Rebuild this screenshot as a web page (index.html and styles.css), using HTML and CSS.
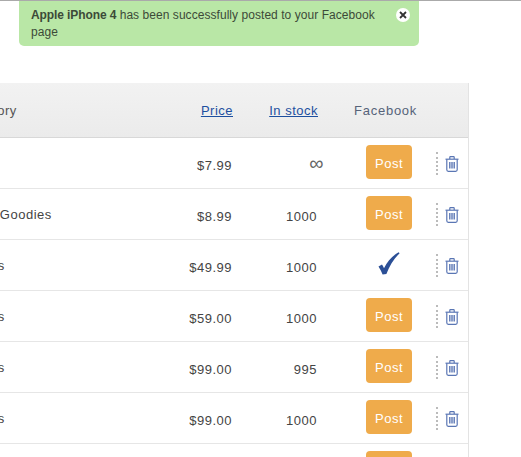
FILE: index.html
```html
<!DOCTYPE html>
<html lang="en">
<head>
<meta charset="utf-8">
<title>Products</title>
<link rel="stylesheet" href="styles.css">
</head>
<body>
<div class="notice">
  <p class="notice-text"><strong>Apple iPhone 4</strong> has been successfully posted to your Facebook page</p>
  <span class="notice-close"><svg viewBox="0 0 8 8" width="8" height="8"><path d="M1 1L7 7M7 1L1 7"/></svg></span>
</div>
<table class="products">
  <colgroup><col class="c-name"><col class="c-price"><col class="c-stock"><col class="c-fb"><col class="c-act"></colgroup>
  <thead>
    <tr><th class="name">Category</th><th class="num"><a href="#">Price</a></th><th class="num"><a href="#">In stock</a></th><th class="fb">Facebook</th><th></th></tr>
  </thead>
  <tbody>
    <tr><td class="name"></td><td class="num">$7.99</td><td class="num inf">∞</td><td class="fb"><a class="post" href="#">Post</a></td><td><div class="act"><span class="dots"></span><svg class="trash" viewBox="0 0 14 16"><use href="#t"/></svg></div></td></tr>
    <tr><td class="name">Apple Goodies</td><td class="num">$8.99</td><td class="num">1000</td><td class="fb"><a class="post" href="#">Post</a></td><td><div class="act"><span class="dots"></span><svg class="trash" viewBox="0 0 14 16"><use href="#t"/></svg></div></td></tr>
    <tr><td class="name">Tablets</td><td class="num">$49.99</td><td class="num">1000</td><td class="fb"><svg class="check" viewBox="0 0 22 23"><path d="M0.5 14.5L4 12.4C4.8 13.6 5.4 14.8 6 16.2C9.5 9.5 14 4 20.6 0.2L21.6 1.2C15.5 7 11.5 14 8.4 22L4.6 22.6C3.6 19.8 2.2 17 0.5 14.5Z"/></svg></td><td><div class="act"><span class="dots"></span><svg class="trash" viewBox="0 0 14 16"><use href="#t"/></svg></div></td></tr>
    <tr><td class="name">Tablets</td><td class="num">$59.00</td><td class="num">1000</td><td class="fb"><a class="post" href="#">Post</a></td><td><div class="act"><span class="dots"></span><svg class="trash" viewBox="0 0 14 16"><use href="#t"/></svg></div></td></tr>
    <tr><td class="name">Tablets</td><td class="num">$99.00</td><td class="num">995</td><td class="fb"><a class="post" href="#">Post</a></td><td><div class="act"><span class="dots"></span><svg class="trash" viewBox="0 0 14 16"><use href="#t"/></svg></div></td></tr>
    <tr><td class="name">Tablets</td><td class="num">$99.00</td><td class="num">1000</td><td class="fb"><a class="post" href="#">Post</a></td><td><div class="act"><span class="dots"></span><svg class="trash" viewBox="0 0 14 16"><use href="#t"/></svg></div></td></tr>
    <tr><td class="name"></td><td class="num"></td><td class="num"></td><td class="fb"><a class="post" href="#">Post</a></td><td></td></tr>
  </tbody>
</table>
<svg class="defs" width="0" height="0"><defs><g id="t" fill="none" stroke="#5a76b4" stroke-width="1.2"><path d="M0.5 3.2H13.5"/><path d="M4.8 3V1.2Q4.8 0.6 5.4 0.6H8.6Q9.2 0.6 9.2 1.2V3"/><path d="M1.8 3.2V13.8Q1.8 15.3 3.3 15.3H10.7Q12.2 15.3 12.2 13.8V3.2"/><path d="M4.8 6V12.6M7 6V12.6M9.2 6V12.6" stroke-width="1.4"/></g></defs></svg>
</body>
</html>
```
FILE: styles.css
```css
html, body {
  margin: 0;
  padding: 0;
  height: 457px;
  overflow: hidden;
  background: #fff;
}
body {
  border-top: 1px solid #aaa;
  box-sizing: border-box;
  font-family: "Liberation Sans", Arial, sans-serif;
  font-size: 13px;
  letter-spacing: 0.5px;
  color: #444;
}
.notice {
  display: flex;
  align-items: flex-start;
  justify-content: space-between;
  box-sizing: border-box;
  width: 400px;
  height: 45px;
  margin-left: 19px;
  padding: 6px 9px 0 12px;
  background: #b9e7a6;
  border-radius: 0 0 5px 5px;
  color: #3c4a38;
}
.notice-text {
  width: 350px;
  margin: 0;
  font-size: 12px;
  letter-spacing: 0.05px;
  line-height: 17px;
}
.notice-text strong {
  letter-spacing: -0.1px;
}
.notice-close {
  display: flex;
  align-items: center;
  justify-content: center;
  width: 14px;
  height: 14px;
  margin-top: 1px;
  border-radius: 50%;
  background: #fff;
}
.notice-close path {
  fill: none;
  stroke: #333;
  stroke-width: 1.8;
}
.products {
  table-layout: fixed;
  width: 520px;
  margin: 37px 0 0 -52px;
  border-collapse: separate;
  border-spacing: 0;
  border-right: 1px solid #e3e3e3;
}
.c-name { width: 222px; }
.c-price { width: 74px; }
.c-stock { width: 85px; }
.c-fb { width: 97px; }
.c-act { width: 42px; }
th {
  height: 54px;
  padding: 0;
  font-weight: normal;
  text-align: left;
  color: #555;
  background: linear-gradient(#f2f2f2, #ebebeb);
  border-bottom: 1px solid #d8d8d8;
}
th a {
  color: #1d4f9f;
  text-decoration: underline;
}
td {
  height: 50px;
  padding: 0;
  border-bottom: 1px solid #e6e6e6;
}
.name { padding-left: 12px; }
.num {
  padding-right: 12px;
  text-align: right;
}
th.num { padding-right: 11px; }
td.num { padding-top: 4px; height: 46px; }
td.inf {
  padding: 0 5px 0 0;
  height: 50px;
  font-size: 20px;
  color: #666;
}
.fb { padding-left: 37px; }
th.fb {
  padding-left: 25px;
  letter-spacing: 0.75px;
  color: #56637a;
}
.post {
  display: block;
  box-sizing: border-box;
  width: 46px;
  height: 34px;
  margin-top: -2px;
  line-height: 37px;
  text-align: center;
  color: #fff;
  text-decoration: none;
  background: #efab4b;
  border-radius: 4px;
}
.check {
  display: block;
  width: 22px;
  height: 23px;
  margin: -3px 0 0 12px;
  fill: #2b4f96;
}
.act {
  display: flex;
  align-items: center;
  gap: 7px;
  padding-left: 10px;
}
.dots {
  width: 0;
  height: 23px;
  border-left: 2px dotted #bbb;
}
.trash {
  width: 14px;
  height: 16px;
  margin-top: 2px;
}
.defs { position: absolute; }
```
